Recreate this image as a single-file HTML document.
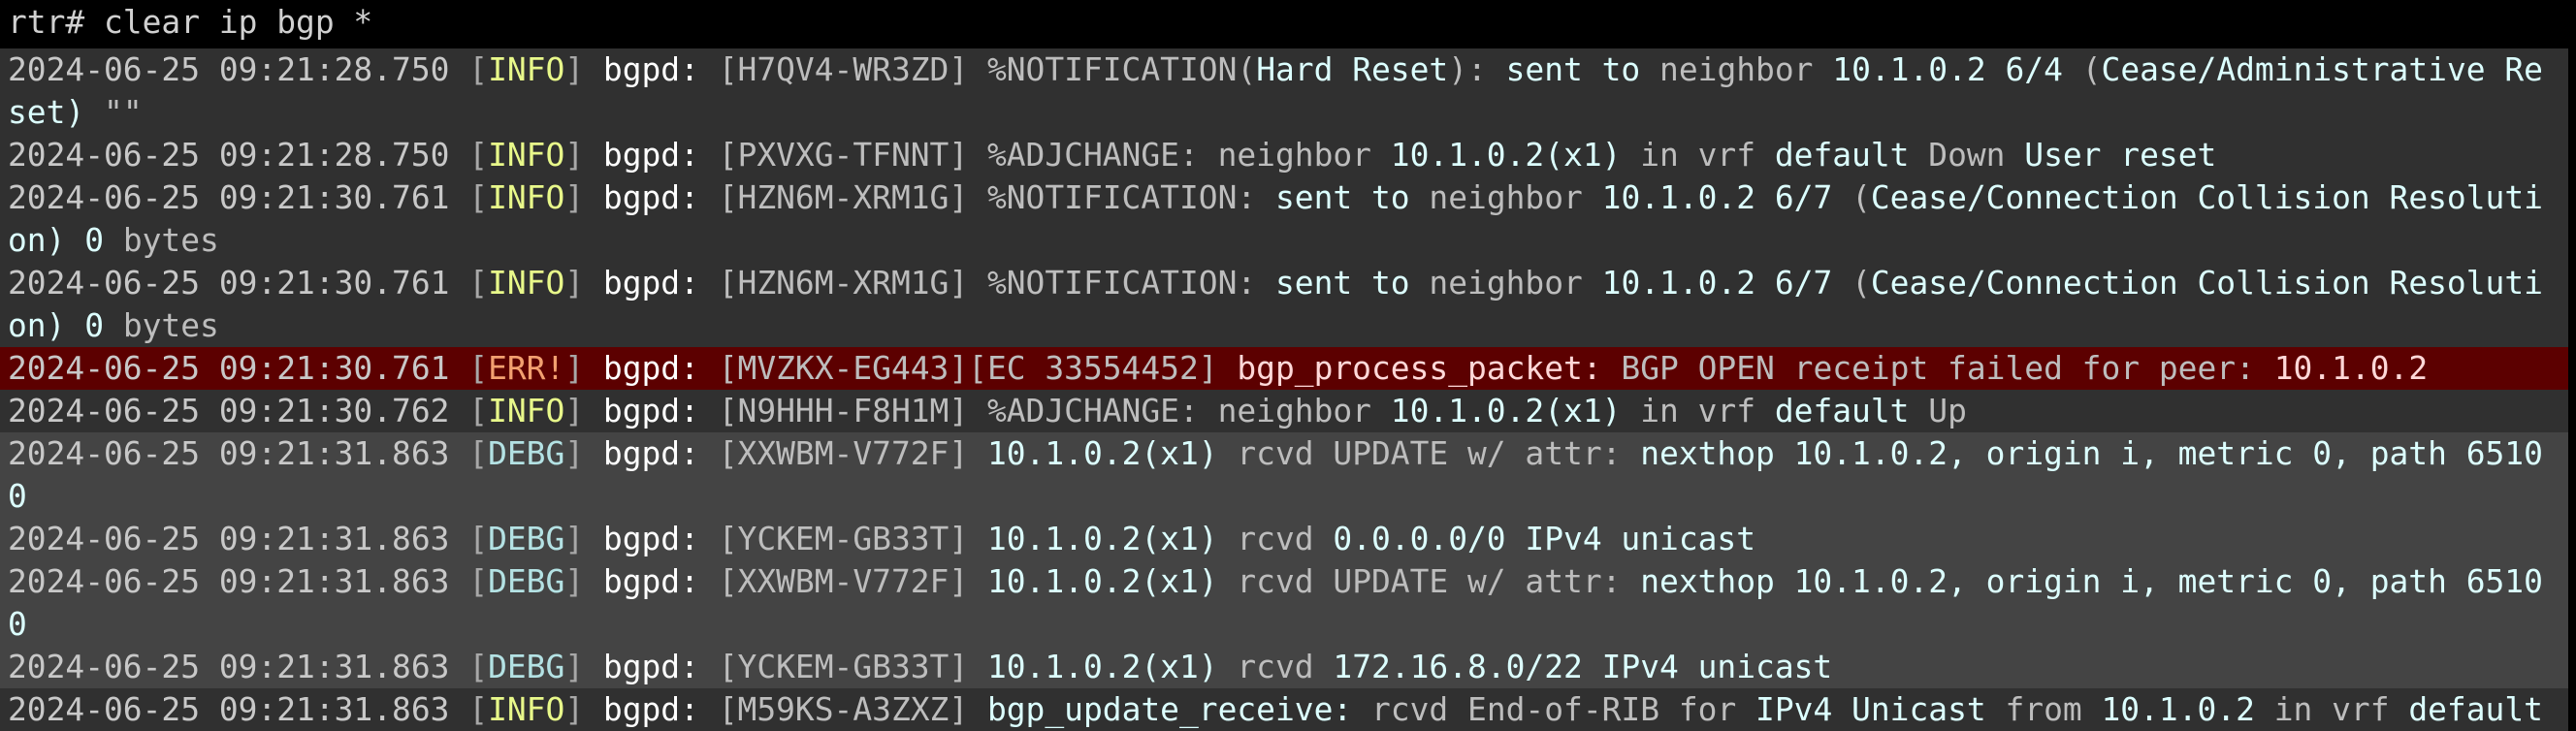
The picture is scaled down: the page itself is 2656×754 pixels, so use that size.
<!DOCTYPE html>
<html><head><meta charset="utf-8"><style>
html,body{margin:0;padding:0;background:#000;width:2656px;height:754px;overflow:hidden}
.w{font-family:"DejaVu Sans Mono","Liberation Mono",monospace;font-size:32.9px;color:#bdbdbd}
.r{height:44px;line-height:44px;padding-left:8px;width:2640px;white-space:pre;overflow:hidden}
.top{height:50px;line-height:46px;background:#000;color:#d0d0d0}
.a{background:#303030}.b{background:#444}.e{background:#5c0000}
.t{color:#c8c8c8}.k{color:#a8a8a8}.i{color:#e8f88a}.d{color:#b4e2e4}.x{color:#f2a070}
.p{color:#fff}.c{color:#dcffff}.er{color:#ffd8d8}
</style></head><body><div class="w"><div class="r top">rtr# clear ip bgp *</div><div class="r a"><span class="t">2024-06-25 09:21:28.750 </span><span class="k">[</span><span class="i">INFO</span><span class="k">]</span> <span class="p">bgpd:</span> [H7QV4-WR3ZD] %NOTIFICATION(<span class="c">Hard Reset</span>): <span class="c">sent to</span> neighbor <span class="c">10.1.0.2 6/4</span> (<span class="c">Cease/Administrative Re</span></div><div class="r a"><span class="c">set)</span> ""</div><div class="r a"><span class="t">2024-06-25 09:21:28.750 </span><span class="k">[</span><span class="i">INFO</span><span class="k">]</span> <span class="p">bgpd:</span> [PXVXG-TFNNT] %ADJCHANGE: neighbor <span class="c">10.1.0.2(x1)</span> in vrf <span class="c">default</span> Down <span class="c">User reset</span></div><div class="r a"><span class="t">2024-06-25 09:21:30.761 </span><span class="k">[</span><span class="i">INFO</span><span class="k">]</span> <span class="p">bgpd:</span> [HZN6M-XRM1G] %NOTIFICATION: <span class="c">sent to</span> neighbor <span class="c">10.1.0.2 6/7</span> (<span class="c">Cease/Connection Collision Resoluti</span></div><div class="r a"><span class="c">on)</span> <span class="c">0</span> bytes</div><div class="r a"><span class="t">2024-06-25 09:21:30.761 </span><span class="k">[</span><span class="i">INFO</span><span class="k">]</span> <span class="p">bgpd:</span> [HZN6M-XRM1G] %NOTIFICATION: <span class="c">sent to</span> neighbor <span class="c">10.1.0.2 6/7</span> (<span class="c">Cease/Connection Collision Resoluti</span></div><div class="r a"><span class="c">on)</span> <span class="c">0</span> bytes</div><div class="r e"><span class="t">2024-06-25 09:21:30.761 </span><span class="k">[</span><span class="x">ERR!</span><span class="k">]</span> <span class="p">bgpd:</span> [MVZKX-EG443][EC 33554452] <span class="er">bgp_process_packet:</span> BGP OPEN receipt failed for peer: <span class="er">10.1.0.2</span></div><div class="r a"><span class="t">2024-06-25 09:21:30.762 </span><span class="k">[</span><span class="i">INFO</span><span class="k">]</span> <span class="p">bgpd:</span> [N9HHH-F8H1M] %ADJCHANGE: neighbor <span class="c">10.1.0.2(x1)</span> in vrf <span class="c">default</span> Up</div><div class="r b"><span class="t">2024-06-25 09:21:31.863 </span><span class="k">[</span><span class="d">DEBG</span><span class="k">]</span> <span class="p">bgpd:</span> [XXWBM-V772F] <span class="c">10.1.0.2(x1)</span> rcvd UPDATE w/ attr: <span class="c">nexthop 10.1.0.2, origin i, metric 0, path 6510</span></div><div class="r b"><span class="c">0</span></div><div class="r b"><span class="t">2024-06-25 09:21:31.863 </span><span class="k">[</span><span class="d">DEBG</span><span class="k">]</span> <span class="p">bgpd:</span> [YCKEM-GB33T] <span class="c">10.1.0.2(x1)</span> rcvd <span class="c">0.0.0.0/0 IPv4 unicast</span></div><div class="r b"><span class="t">2024-06-25 09:21:31.863 </span><span class="k">[</span><span class="d">DEBG</span><span class="k">]</span> <span class="p">bgpd:</span> [XXWBM-V772F] <span class="c">10.1.0.2(x1)</span> rcvd UPDATE w/ attr: <span class="c">nexthop 10.1.0.2, origin i, metric 0, path 6510</span></div><div class="r b"><span class="c">0</span></div><div class="r b"><span class="t">2024-06-25 09:21:31.863 </span><span class="k">[</span><span class="d">DEBG</span><span class="k">]</span> <span class="p">bgpd:</span> [YCKEM-GB33T] <span class="c">10.1.0.2(x1)</span> rcvd <span class="c">172.16.8.0/22 IPv4 unicast</span></div><div class="r a"><span class="t">2024-06-25 09:21:31.863 </span><span class="k">[</span><span class="i">INFO</span><span class="k">]</span> <span class="p">bgpd:</span> [M59KS-A3ZXZ] <span class="c">bgp_update_receive:</span> rcvd End-of-RIB for <span class="c">IPv4 Unicast</span> from <span class="c">10.1.0.2</span> in vrf <span class="c">default</span></div></div></body></html>
